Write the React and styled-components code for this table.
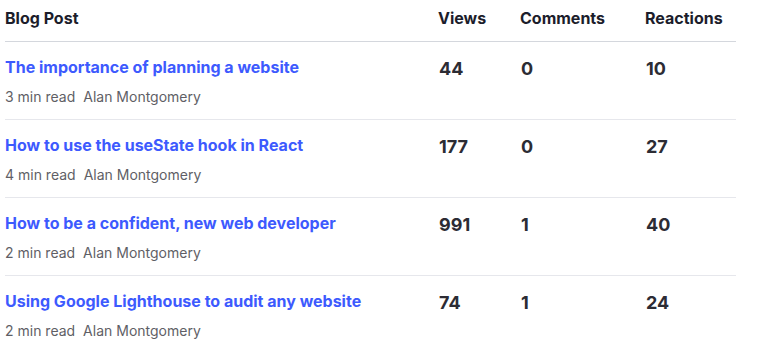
import React from "react";
import styled, { createGlobalStyle } from "styled-components";

const posts = [
  { title: "The importance of planning a website", read: "3 min read", views: 44, comments: 0, reactions: 10 },
  { title: "How to use the useState hook in React", read: "4 min read", views: 177, comments: 0, reactions: 27 },
  { title: "How to be a confident, new web developer", read: "2 min read", views: 991, comments: 1, reactions: 40 },
  { title: "Using Google Lighthouse to audit any website", read: "2 min read", views: 74, comments: 1, reactions: 24 },
];

export default function App() {
  return (
    <>
      <GlobalStyle />
      <Wrapper>
        <Table>
          <colgroup>
            <col style={{ width: 433 }} />
            <col style={{ width: 82 }} />
            <col style={{ width: 125 }} />
            <col style={{ width: 91 }} />
          </colgroup>
          <thead>
            <tr>
              <Th>Blog Post</Th>
              <Th>Views</Th>
              <Th>Comments</Th>
              <Th>Reactions</Th>
            </tr>
          </thead>
          <tbody>
            {posts.map((p, i) => (
              <Row key={i} last={i === posts.length - 1}>
                <PostCell>
                  <Title href="#">{p.title}</Title>
                  <Meta>
                    <span>{p.read}</span>
                    <span>Alan Montgomery</span>
                  </Meta>
                </PostCell>
                <Num>{p.views}</Num>
                <Num>{p.comments}</Num>
                <Num>{p.reactions}</Num>
              </Row>
            ))}
          </tbody>
        </Table>
      </Wrapper>
    </>
  );
}

const GlobalStyle = createGlobalStyle`
  body {
    margin: 0;
    background: #fff;
    font-family: Inter, "Noto Sans", sans-serif;
  }
`;

const Wrapper = styled.div`
  padding: 0 0 0 5px;
`;

const Table = styled.table`
  width: 731px;
  border-collapse: collapse;
  table-layout: fixed;
`;

const Th = styled.th`
  text-align: left;
  padding: 8px 0 13px 0;
  font-size: 16px;
  font-weight: 650;
  color: #1c1d2b;
  border-bottom: 1px solid #d4d7dd;
  line-height: 20px;
`;

const Row = styled.tr`
  td {
    border-bottom: ${(p) => (p.last ? "none" : "1px solid #e6e7ec")};
  }
`;

const PostCell = styled.td`
  padding: 15px 0 12px 0;
  vertical-align: top;
`;

const Title = styled.a`
  display: block;
  font-size: 16px;
  font-weight: 650;
  line-height: 20px;
  color: #3d5afe;
  text-decoration: none;
`;

const Meta = styled.div`
  display: flex;
  gap: 8px;
  margin-top: 10px;
  font-size: 14px;
  line-height: 20px;
  color: #5f5f66;
`;

const Num = styled.td`
  vertical-align: top;
  padding: 16px 0 0 1px;
  font-size: 18px;
  font-weight: 650;
  line-height: 22px;
  color: #2c2c34;
`;
